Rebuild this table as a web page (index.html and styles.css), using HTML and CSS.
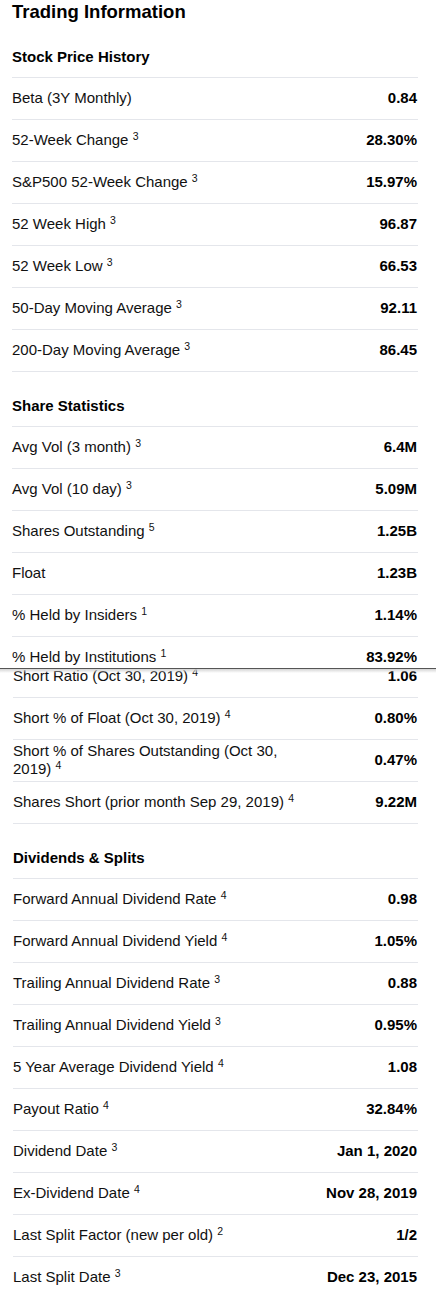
FILE: index.html
```html
<!DOCTYPE html>
<html lang="en">
<head>
  <meta charset="UTF-8" />
  <title>Trading Information</title>
  <link rel="stylesheet" href="styles.css">
</head>
<body>

  <!-- phần trên của ảnh chụp -->
  <div class="panel panel-top">
    <h1>Trading Information</h1>

    <h2>Stock Price History</h2>
    <div class="rows">
      <div class="row"><span class="label">Beta (3Y Monthly)</span><span class="value">0.84</span></div>
      <div class="row"><span class="label">52-Week Change <sup>3</sup></span><span class="value">28.30%</span></div>
      <div class="row"><span class="label">S&amp;P500 52-Week Change <sup>3</sup></span><span class="value">15.97%</span></div>
      <div class="row"><span class="label">52 Week High <sup>3</sup></span><span class="value">96.87</span></div>
      <div class="row"><span class="label">52 Week Low <sup>3</sup></span><span class="value">66.53</span></div>
      <div class="row"><span class="label">50-Day Moving Average <sup>3</sup></span><span class="value">92.11</span></div>
      <div class="row"><span class="label">200-Day Moving Average <sup>3</sup></span><span class="value">86.45</span></div>
    </div>

    <h2>Share Statistics</h2>
    <div class="rows">
      <div class="row"><span class="label">Avg Vol (3 month) <sup>3</sup></span><span class="value">6.4M</span></div>
      <div class="row"><span class="label">Avg Vol (10 day) <sup>3</sup></span><span class="value">5.09M</span></div>
      <div class="row"><span class="label">Shares Outstanding <sup>5</sup></span><span class="value">1.25B</span></div>
      <div class="row"><span class="label">Float</span><span class="value">1.23B</span></div>
      <div class="row"><span class="label">% Held by Insiders <sup>1</sup></span><span class="value">1.14%</span></div>
      <div class="row"><span class="label">% Held by Institutions <sup>1</sup></span><span class="value">83.92%</span></div>
    </div>
  </div>

  <div class="seam"></div>

  <!-- phần dưới, ghép nối -->
  <div class="panel panel-bottom">
    <div class="rows rows-cont">
      <div class="row"><span class="label">Short Ratio (Oct 30, 2019) <sup>4</sup></span><span class="value">1.06</span></div>
      <div class="row"><span class="label">Short % of Float (Oct 30, 2019) <sup>4</sup></span><span class="value">0.80%</span></div>
      <div class="row"><span class="label">Short % of Shares Outstanding (Oct 30, 2019) <sup>4</sup></span><span class="value">0.47%</span></div>
      <div class="row"><span class="label">Shares Short (prior month Sep 29, 2019) <sup>4</sup></span><span class="value">9.22M</span></div>
    </div>

    <h2>Dividends &amp; Splits</h2>
    <div class="rows rows-last">
      <div class="row"><span class="label">Forward Annual Dividend Rate <sup>4</sup></span><span class="value">0.98</span></div>
      <div class="row"><span class="label">Forward Annual Dividend Yield <sup>4</sup></span><span class="value">1.05%</span></div>
      <div class="row"><span class="label">Trailing Annual Dividend Rate <sup>3</sup></span><span class="value">0.88</span></div>
      <div class="row"><span class="label">Trailing Annual Dividend Yield <sup>3</sup></span><span class="value">0.95%</span></div>
      <div class="row"><span class="label">5 Year Average Dividend Yield <sup>4</sup></span><span class="value">1.08</span></div>
      <div class="row"><span class="label">Payout Ratio <sup>4</sup></span><span class="value">32.84%</span></div>
      <div class="row"><span class="label">Dividend Date <sup>3</sup></span><span class="value">Jan 1, 2020</span></div>
      <div class="row"><span class="label">Ex-Dividend Date <sup>4</sup></span><span class="value">Nov 28, 2019</span></div>
      <div class="row"><span class="label">Last Split Factor (new per old) <sup>2</sup></span><span class="value">1/2</span></div>
      <div class="row"><span class="label">Last Split Date <sup>3</sup></span><span class="value">Dec 23, 2015</span></div>
    </div>
  </div>

</body>
</html>
```

FILE: styles.css
```css
body {
  font-family: "Liberation Sans", Arial, sans-serif;
  margin: 0;
  background: #fff;
  color: #111;
}

.panel {
  overflow: hidden;
}

.panel-top {
  height: 668px;
  padding: 0 18px 0 12px;
}

.panel-bottom {
  position: relative;
  padding: 0 18px 0 13px;
}

/* bóng mờ dưới đường nối */
.panel-bottom::before {
  content: "";
  position: absolute;
  top: 0;
  left: 0;
  right: 0;
  height: 4px;
  background: linear-gradient(#d4d4d4, rgba(255, 255, 255, 0));
  z-index: 1;
}

.seam {
  height: 1px;
  background: #555;
}

h1 {
  margin: 0;
  padding-top: 1px;
  font-size: 18.5px;
  line-height: 22px;
  font-weight: bold;
  color: #000;
}

h2 {
  margin: 0;
  padding: 24.5px 0 11.5px;
  font-size: 15px;
  line-height: 18px;
  font-weight: bold;
  color: #000;
}

.rows {
  border-top: 1px solid #e4e6eb;
}

.rows-cont {
  border-top: none;
  margin-top: -13px;
}

.row {
  display: flex;
  align-items: center;
  box-sizing: border-box;
  min-height: 42px;
  padding: 1px 0 3px;
  border-bottom: 1px solid #e4e6eb;
  font-size: 15px;
  line-height: 18px;
}

.rows-last .row:last-child {
  border-bottom: none;
}

.label {
  flex: 1;
  min-width: 0;
}

.label sup {
  font-size: 10.5px;
  line-height: 0;
  vertical-align: 5px;
}

.value {
  flex: 0 0 105px;
  text-align: right;
  font-weight: bold;
  color: #000;
  padding-right: 1px;
  box-sizing: border-box;
}
```
